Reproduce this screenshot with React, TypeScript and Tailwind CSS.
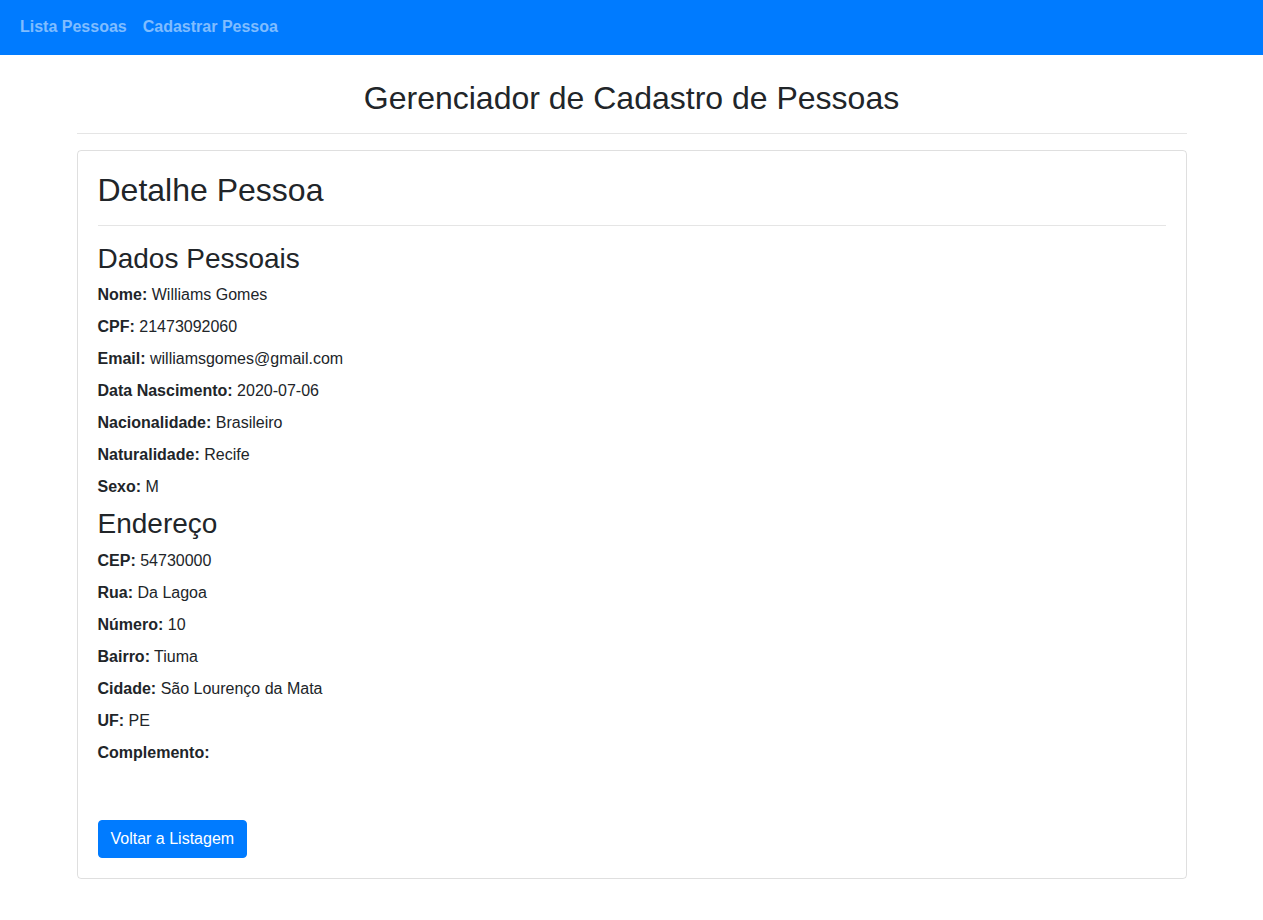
export default function App() {
  const pessoais: [string, string][] = [
    ['Nome:', 'Williams Gomes'],
    ['CPF:', '21473092060'],
    ['Email:', 'williamsgomes@gmail.com'],
    ['Data Nascimento:', '2020-07-06'],
    ['Nacionalidade:', 'Brasileiro'],
    ['Naturalidade:', 'Recife'],
    ['Sexo:', 'M'],
  ];
  const endereco: [string, string][] = [
    ['CEP:', '54730000'],
    ['Rua:', 'Da Lagoa'],
    ['Número:', '10'],
    ['Bairro:', 'Tiuma'],
    ['Cidade:', 'São Lourenço da Mata'],
    ['UF:', 'PE'],
    ['Complemento:', ''],
  ];

  return (
    <div className="min-h-screen bg-white font-['Liberation_Sans',Arial,sans-serif] text-base leading-6 text-[#212529]">
      <nav className="flex h-[55px] items-center gap-4 bg-[#007bff] pb-px pl-5">
        <a href="#" className="font-bold text-white/50">Lista Pessoas</a>
        <a href="#" className="font-bold text-white/50">Cadastrar Pessoa</a>
      </nav>

      <div className="mx-auto w-[1110px]">
        <h2 className="mt-6 text-center text-[32px] leading-[1.2] font-medium">
          Gerenciador de Cadastro de Pessoas
        </h2>
        <hr className="my-4 border-t border-black/10" />

        <div className="rounded border border-black/[0.125] p-5">
          <h2 className="text-[32px] leading-[1.2] font-medium">Detalhe Pessoa</h2>
          <hr className="mt-[15px] mb-4 border-t border-black/10" />

          <h3 className="mb-2 text-[28px] leading-[1.2] font-medium">Dados Pessoais</h3>
          {pessoais.map(([k, v]) => (
            <p key={k} className="mb-2">
              <strong className="font-bold">{k}</strong> {v}
            </p>
          ))}

          <h3 className="mb-2 text-[28px] leading-[1.2] font-medium">Endereço</h3>
          {endereco.map(([k, v]) => (
            <p key={k} className="mb-2">
              <strong className="font-bold">{k}</strong> {v}
            </p>
          ))}

          <div className="mt-[55px]">
            <button className="rounded border border-[#007bff] bg-[#007bff] px-3 py-1.5 text-white">
              Voltar a Listagem
            </button>
          </div>
        </div>
      </div>
    </div>
  );
}
